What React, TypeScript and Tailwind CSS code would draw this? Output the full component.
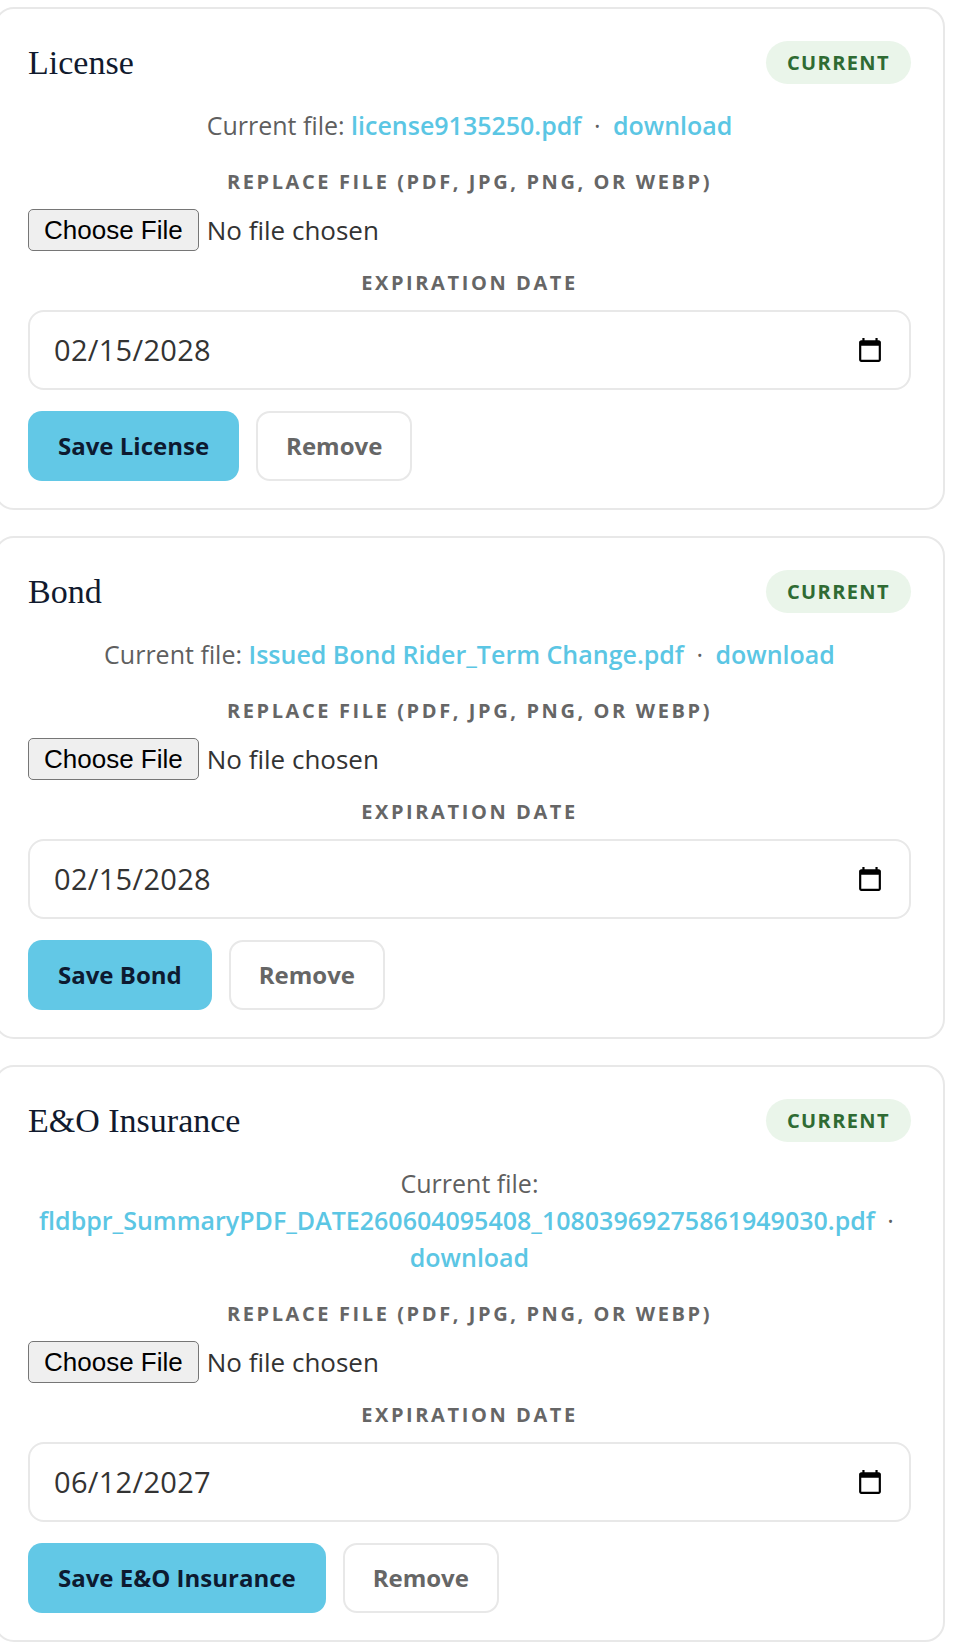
import React from "react";

type Doc = {
  title: string;
  file: string;
  date: string;
  save: string;
};

const docs: Doc[] = [
  { title: "License", file: "license9135250.pdf", date: "02/15/2028", save: "Save License" },
  { title: "Bond", file: "Issued Bond Rider_Term Change.pdf", date: "02/15/2028", save: "Save Bond" },
  {
    title: "E&O Insurance",
    file: "fldbpr_SummaryPDF_DATE260604095408_10803969275861949030.pdf",
    date: "06/12/2027",
    save: "Save E&O Insurance",
  },
];

const CalendarIcon = () => (
  <svg width="22" height="24" viewBox="2 1 20 22" fill="#000" aria-hidden="true">
    <path d="M20 3h-1V1h-2v2H7V1H5v2H4c-1.1 0-2 .9-2 2v16c0 1.1.9 2 2 2h16c1.1 0 2-.9 2-2V5c0-1.1-.9-2-2-2zm0 18H4V8h16v13z" />
  </svg>
);

const DocCard = ({ doc }: { doc: Doc }) => {
  return (
    <section className="rounded-[20px] border-2 border-[#e8e8e8] bg-white pt-8 pb-[27px] pl-8 pr-8">
      {/* Header */}
      <div className="flex items-center justify-between">
        <h2 className="font-['Liberation_Serif',serif] text-[34px] leading-[43px] text-[#111a2e]">
          {doc.title}
        </h2>
        <span className="flex h-[43px] items-center rounded-full bg-[#eaf5ea] px-[21px] text-[20px] font-bold tracking-[1.4px] text-[#2f6b33]">
          CURRENT
        </span>
      </div>

      {/* Current file */}
      <p className="mt-[23px] text-center text-[25px] leading-[37px] text-[#5f5f5f]">
        Current file:{" "}
        <a href="#" className="font-semibold text-[#5bc6e4]">
          {doc.file}
        </a>{" "}
        <span className="mx-[6px] text-[#5f5f5f]">·</span>{" "}
        <a href="#" className="font-semibold text-[#5bc6e4]">
          download
        </a>
      </p>

      {/* Replace file */}
      <div className="mt-[24px] text-center text-[20px] font-bold leading-[28px] tracking-[2.6px] text-[#666666]">
        REPLACE FILE (PDF, JPG, PNG, OR WEBP)
      </div>
      <div className="mt-[13px] flex h-[42px] items-center">
        <button className="h-[42px] rounded-[5px] border border-[#767676] bg-[#efefef] px-[15px] font-['Liberation_Sans',Arial,sans-serif] text-[26px] leading-none text-black">
          Choose File
        </button>
        <span className="ml-[8px] text-[26px] text-[#333333]">No file chosen</span>
      </div>

      {/* Expiration date */}
      <div className="mt-[18px] text-center text-[20px] font-bold leading-[28px] tracking-[2.6px] text-[#666666]">
        EXPIRATION DATE
      </div>
      <div className="mt-[13px] flex h-[80px] items-center justify-between rounded-[16px] border-2 border-[#e8e8e8] pl-[24px] pr-[28px]">
        <span className="text-[29px] tracking-[0.3px] text-[#333333]">{doc.date}</span>
        <CalendarIcon />
      </div>

      {/* Actions */}
      <div className="mt-[21px] flex gap-[17px]">
        <button className="h-[70px] rounded-[14px] bg-[#62c8e6] px-[30px] text-[24px] font-bold text-[#0d1a30]">
          {doc.save}
        </button>
        <button className="h-[70px] rounded-[14px] border-2 border-[#e8e8e8] bg-white px-[28px] text-[24px] font-bold text-[#666666]">
          Remove
        </button>
      </div>
    </section>
  );
};

export default function App() {
  return (
    <div className="min-h-[1648px] bg-white font-['Open_Sans',sans-serif]">
      <div className="-ml-[6px] flex w-[951px] flex-col gap-[26px] pt-[7px]">
        {docs.map((doc) => (
          <DocCard key={doc.title} doc={doc} />
        ))}
      </div>
    </div>
  );
}
